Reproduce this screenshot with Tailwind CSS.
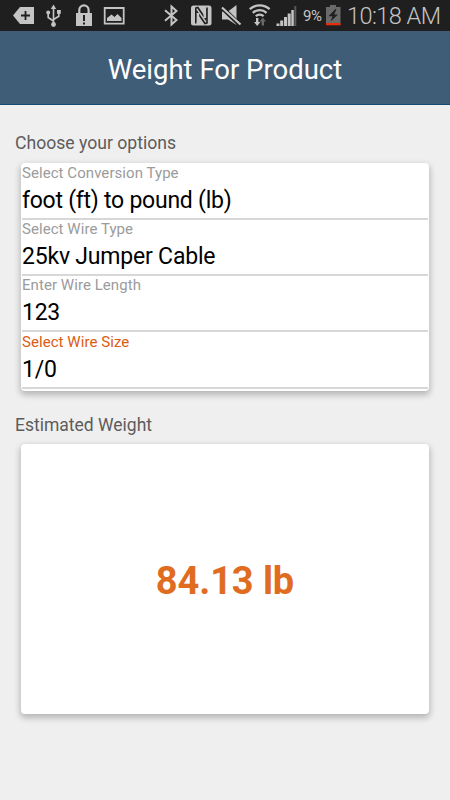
<!DOCTYPE html>
<html lang="en">
<head>
  <meta charset="UTF-8">
  <meta name="viewport" content="width=device-width, initial-scale=1.0">
  <title>Weight For Product</title>
  <script src="https://cdn.jsdelivr.net/npm/@tailwindcss/browser@4"></script>
</head>
<body class="h-screen overflow-hidden bg-[#efefef] font-['Roboto',sans-serif]">
  <!-- Status bar -->
  <div class="flex h-[31px] items-start bg-[#1f1f1f] pl-3 text-[#c4c4c4]">
    <svg class="h-[31px] w-[23px]" viewBox="0 0 23 31" fill="currentColor">
      <path d="M1 15.5 8 7h14v17H8z"/>
      <path d="M13.500 11v9M9 15.500h9" stroke="#1f1f1f" stroke-width="1.800"/>
    </svg>
    <svg class="ml-2.5 h-[31px] w-[18px]" viewBox="0 0 18 31" fill="currentColor">
      <path d="M8.500 4.500 11.200 9H9.300v14H7.700V9H5.800z"/>
      <path d="M8.500 21 3.200 17.500v-5M8.500 19.500l5.300-3.200V12" fill="none" stroke="currentColor" stroke-width="1.700"/>
      <circle cx="3.200" cy="12.500" r="1.900"/>
      <path d="M12 10h3.800v3.800H12z"/>
      <circle cx="8.500" cy="24.500" r="2.400"/>
    </svg>
    <svg class="ml-[13px] h-[31px] w-[16px]" viewBox="0 0 16 31" fill="currentColor">
      <path d="M3.300 14v-4a4.600 4.600 0 0 1 9.300 0v4" fill="none" stroke="currentColor" stroke-width="2.200"/>
      <path d="M0 13h16v13H0z"/>
      <path d="M7 15h2v6H7zM7 22.500h2v2H7z" fill="#1f1f1f"/>
    </svg>
    <svg class="ml-[11px] h-[31px] w-[22px]" viewBox="0 0 22 31" fill="currentColor">
      <path d="M1.700 8h19v15.700h-19z" fill="none" stroke="currentColor" stroke-width="1.800"/>
      <path d="M4 21v-3l4.500-3.500 3 2.500 3-3 4 4v3z"/>
    </svg>
    <svg class="ml-[39px] h-[31px] w-[15px]" viewBox="0 0 15 31" fill="none" stroke="currentColor" stroke-width="2">
      <path d="M1 10.200 12.500 20l-5 4.500v-18L12.500 11 1 20.800"/>
    </svg>
    <svg class="ml-3 h-[31px] w-[21px]" viewBox="0 0 21 31" fill="currentColor">
      <rect y="5.500" width="20.500" height="20" rx="2.500"/>
      <path d="M4.800 23.500V8l2-.5 7.500 11V9M16 7.500V23l-2 .5-7.500-11V22" fill="none" stroke="#1f1f1f" stroke-width="1.600"/>
      <path d="M8.200 13v10.500h-2.500V13zM12.500 8H15v10h-2.500z"/>
    </svg>
    <svg class="ml-[9px] h-[31px] w-[21px]" viewBox="0 0 21 31" fill="currentColor">
      <path d="M1 11.500h6L15.500 5v20L7 19.500H1z"/>
      <path d="M0 6.500 19 25" stroke="#1f1f1f" stroke-width="4.500"/>
      <path d="M1 7.500 19.500 24.500" stroke="currentColor" stroke-width="2.200"/>
    </svg>
    <svg class="ml-[7px] h-[31px] w-[22px]" viewBox="0 0 22 31" fill="none" stroke="currentColor" stroke-width="2.300">
      <path d="M.8 9.200a14.500 14.500 0 0 1 19.800 0M3.800 12.800a10 10 0 0 1 13.800 0M6.800 16.200a6 6 0 0 1 7.800 0"/>
      <path d="M7 18h2.400v4h2l-3.200 4L5 22h2z" fill="currentColor" stroke="none"/>
      <path d="M12.600 25.500v-4h-2l3.200-4 3.200 4h-2v4z" fill="#696969" stroke="none"/>
    </svg>
    <svg class="ml-[5px] h-[31px] w-[21px]" viewBox="0 0 21 31" fill="currentColor">
      <path d="M.5 23.500h3v2.500h-3zM4.200 20.500h3V26h-3zM8 17h3v9H8zM11.700 13.500h3V26h-3zM15.300 10h2.500v16h-2.500z"/>
      <path d="M18.300 6h2v20h-2z" fill="#5a5a5a"/>
    </svg>
    <span class="ml-1.5 w-[22px] whitespace-nowrap text-[15px] leading-[33px] tracking-[-0.500px]">9%</span>
    <svg class="ml-px h-[31px] w-[15px]" viewBox="0 0 15 31">
      <path d="M0 7h4V5h6v2h4.500v18H0z" fill="#6a6a6a"/>
      <path d="M0 23h14.500v2.300H0z" fill="#e52d0b"/>
      <path d="m9.500 9-7 7.200h4L4.500 21.500l7.500-7H8.200L10.500 9z" fill="#1f1f1f"/>
    </svg>
    <span class="ml-[6px] whitespace-nowrap text-[23.500px] font-light leading-[32px] tracking-[-0.550px]">10:18 AM</span>
  </div>

  <header class="flex h-[74px] items-center justify-center border-b border-[#174a70] bg-[#3f5d77] pt-1">
    <h1 class="text-[27.500px] leading-none text-white">Weight For Product</h1>
  </header>

  <main class="px-[21px]">
    <h2 class="-ml-1.5 h-[58px] pt-[27px] text-[17.600px] leading-[22px] text-[#5c5c5c]">Choose your options</h2>
    <section class="h-[228px] rounded-[4px] bg-white px-px shadow-[0_3px_6px_1px_rgba(0,0,0,0.240)]">
      <div class="h-[57px] border-b-2 border-[#d7d7d7]">
        <p class="h-5 text-[15px] leading-5 tracking-[0.060px] text-[#9b9b9b]">Select Conversion Type</p>
        <p class="pt-px text-[23px] leading-[34px] tracking-[-0.250px] text-black">foot (ft) to pound (lb)</p>
      </div>
      <div class="h-14 border-b-2 border-[#d7d7d7]">
        <p class="h-[19px] text-[15px] leading-[18px] tracking-[0.060px] text-[#9b9b9b]">Select Wire Type</p>
        <p class="pt-px text-[23px] leading-[34px] tracking-[-0.200px] text-black">25kv Jumper Cable</p>
      </div>
      <div class="h-14 border-b-2 border-[#d7d7d7]">
        <p class="h-[19px] text-[15px] leading-[18px] tracking-[0.060px] text-[#9b9b9b]">Enter Wire Length</p>
        <p class="pt-px text-[23px] leading-[34px] tracking-[-0.250px] text-black">123</p>
      </div>
      <div class="h-[57px] border-b-2 border-[#d7d7d7]">
        <p class="h-[19px] text-[15px] leading-5 tracking-[0.060px] text-[#dc5b12]">Select Wire Size</p>
        <p class="pt-0.5 text-[23px] leading-[34px] tracking-[-0.250px] text-black">1/0</p>
      </div>
    </section>

    <h2 class="-ml-1.5 h-[53px] pt-[23px] text-[17.500px] leading-[22px] text-[#5c5c5c]">Estimated Weight</h2>
    <section class="flex h-[270px] items-center justify-center rounded-[4px] bg-white pt-1 shadow-[0_3px_6px_1px_rgba(0,0,0,0.240)]">
      <p class="text-[38px] font-bold leading-none tracking-[-0.100px] text-[#e06c1f]">84.13 lb</p>
    </section>
  </main>
</body>
</html>
